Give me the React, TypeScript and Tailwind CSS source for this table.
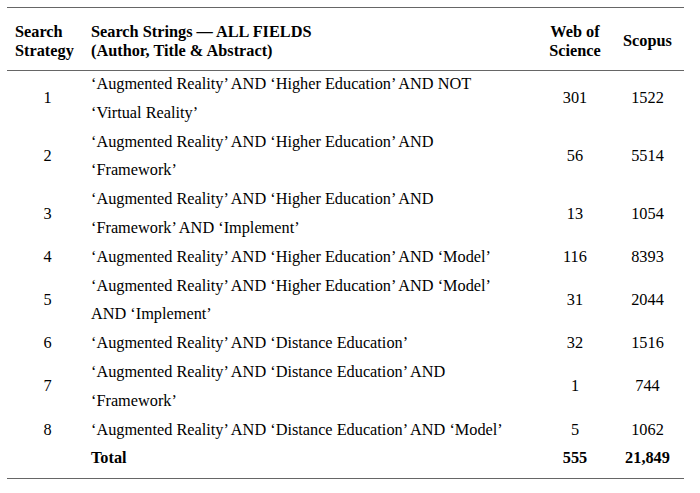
import React from "react";

const rows: { n: string; lines: string[]; wos: string; scopus: string }[] = [
  { n: "1", lines: ["‘Augmented Reality’ AND ‘Higher Education’ AND NOT", "‘Virtual Reality’"], wos: "301", scopus: "1522" },
  { n: "2", lines: ["‘Augmented Reality’ AND ‘Higher Education’ AND", "‘Framework’"], wos: "56", scopus: "5514" },
  { n: "3", lines: ["‘Augmented Reality’ AND ‘Higher Education’ AND", "‘Framework’ AND ‘Implement’"], wos: "13", scopus: "1054" },
  { n: "4", lines: ["‘Augmented Reality’ AND ‘Higher Education’ AND ‘Model’"], wos: "116", scopus: "8393" },
  { n: "5", lines: ["‘Augmented Reality’ AND ‘Higher Education’ AND ‘Model’", "AND ‘Implement’"], wos: "31", scopus: "2044" },
  { n: "6", lines: ["‘Augmented Reality’ AND ‘Distance Education’"], wos: "32", scopus: "1516" },
  { n: "7", lines: ["‘Augmented Reality’ AND ‘Distance Education’ AND", "‘Framework’"], wos: "1", scopus: "744" },
  { n: "8", lines: ["‘Augmented Reality’ AND ‘Distance Education’ AND ‘Model’"], wos: "5", scopus: "1062" },
];

export default function App() {
  return (
    <div
      className="w-[700px] h-[493px] bg-white text-black pt-[7px] pl-[7px]"
      style={{ fontFamily: '"Liberation Serif", "Times New Roman", serif' }}
    >
      <div className="w-[677px] border-t border-b border-[#666]">
        {/* header */}
        <div className="grid grid-cols-[77px_455px_72px_73px] h-[63px] items-center border-b border-[#666] font-bold text-[16.3px] leading-[19px] pt-[3px]">
          <div className="pl-[8px]">
            <div>Search</div>
            <div>Strategy</div>
          </div>
          <div className="pl-[7px]">
            <div>Search Strings — ALL FIELDS</div>
            <div>(Author, Title &amp; Abstract)</div>
          </div>
          <div className="text-center">
            <div>Web of</div>
            <div>Science</div>
          </div>
          <div className="text-center">Scopus</div>
        </div>
        {/* body */}
        <div className="text-[16.3px] leading-[28.8px] pb-[5px] -mt-[1px]">
          {rows.map((r) => (
            <div key={r.n} className="grid grid-cols-[77px_455px_72px_73px] items-center">
              <div className="text-center pl-[4px]">{r.n}</div>
              <div className="pl-[7px]">
                {r.lines.map((l, i) => (
                  <div key={i}>{l}</div>
                ))}
              </div>
              <div className="text-center">{r.wos}</div>
              <div className="text-center">{r.scopus}</div>
            </div>
          ))}
          <div className="grid grid-cols-[77px_455px_72px_73px] items-center font-bold">
            <div></div>
            <div className="pl-[7px]">Total</div>
            <div className="text-center">555</div>
            <div className="text-center">21,849</div>
          </div>
        </div>
      </div>
    </div>
  );
}
